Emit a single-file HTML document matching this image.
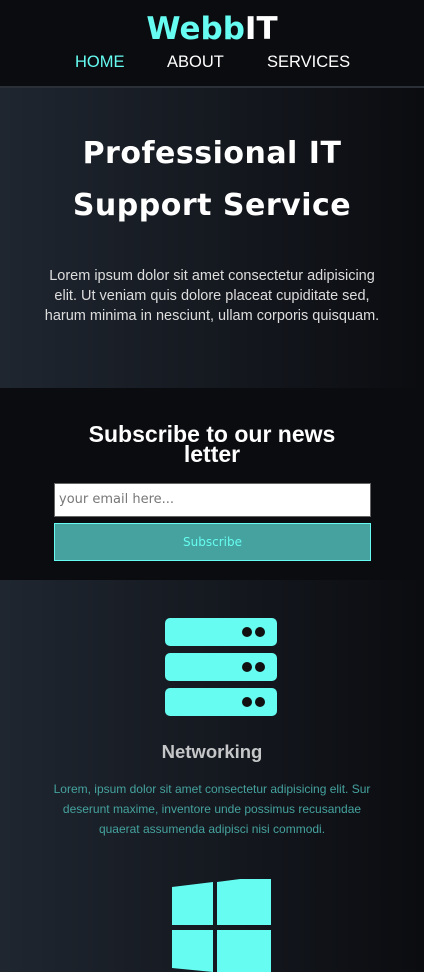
<!DOCTYPE html>
<html><head><style>
*{margin:0;padding:0;box-sizing:border-box}
body{width:424px;height:972px;overflow:hidden;background:#0b0c10;font-family:"Liberation Sans",sans-serif}
header{height:88px;background:#0b0c10;text-align:center;border-bottom:2px solid #2a2f38}
.logo{font-family:"DejaVu Sans",sans-serif;font-weight:bold;font-size:31px;padding-top:10px;line-height:38px;color:#66fcf1}
.logo span{color:#fff}
nav{position:relative;height:30px}
nav a{position:absolute;top:5px;font-size:16.5px;color:#fff;text-decoration:none}
.grad{background:linear-gradient(to right,#1f2630,#0b0c10)}
.hero{height:300px;text-align:center;color:#fff}
.hero h1{font-family:"DejaVu Sans",sans-serif;font-weight:bold;font-size:30px;line-height:52px;padding-top:40px;letter-spacing:0.5px}
.hero p{font-size:14.5px;line-height:20px;color:#ddd;padding:34px 40px 0}
.sub{height:192px;text-align:center;color:#fff;position:relative}
.sub h2{font-size:23px;line-height:20px;padding-top:36px}
.inp{position:absolute;left:54px;top:95px;width:317px;height:34px;background:#fff;border:1px solid #666;color:#777;font-family:"DejaVu Sans",sans-serif;font-size:13px;text-align:left;padding:8px 4px}
.btn{position:absolute;left:54px;top:135px;width:317px;height:38px;background:#45a29e;border:1px solid #66fcf1;color:#66fcf1;font-family:"DejaVu Sans",sans-serif;font-size:12px;line-height:36px}
.svc{height:392px;text-align:center;position:relative}
.svc h3{position:absolute;top:161px;width:100%;font-size:18.5px;color:#c5c6c7}
.svc p{position:absolute;top:199px;left:48px;width:328px;font-size:12px;line-height:20px;color:#45a29e}
</style></head><body>
<header>
<div class="logo">Webb<span>IT</span></div>
<nav><a style="left:75px;color:#66fcf1">HOME</a><a style="left:167px">ABOUT</a><a style="left:267px">SERVICES</a></nav>
</header>
<div class="hero grad">
<h1>Professional IT<br>Support Service</h1>
<p>Lorem ipsum dolor sit amet consectetur adipisicing elit. Ut veniam quis dolore placeat cupiditate sed, harum minima in nesciunt, ullam corporis quisquam.</p>
</div>
<div class="sub">
<h2>Subscribe to our news<br>letter</h2>
<div class="inp">your email here...</div>
<div class="btn">Subscribe</div>
</div>
<div class="svc grad">
<svg style="position:absolute;left:165px;top:38px" width="113" height="100" viewBox="0 0 113 100">
<g fill="#66fcf1"><rect x="0" y="0" width="112" height="28" rx="5"/><rect x="0" y="35" width="112" height="28" rx="5"/><rect x="0" y="70" width="112" height="28" rx="5"/></g>
<g fill="#111"><circle cx="82" cy="14" r="5"/><circle cx="95" cy="14" r="5"/><circle cx="82" cy="49" r="5"/><circle cx="95" cy="49" r="5"/><circle cx="82" cy="84" r="5"/><circle cx="95" cy="84" r="5"/></g>
</svg>
<h3>Networking</h3>
<p>Lorem, ipsum dolor sit amet consectetur adipisicing elit. Sur deserunt maxime, inventore unde possimus recusandae quaerat assumenda adipisci nisi commodi.</p>
<svg style="position:absolute;left:172px;top:299px" width="100" height="93" viewBox="0 0 100 93">
<g fill="#66fcf1"><polygon points="0,8 41,3 41,46 0,46"/><polygon points="45,3 99,-4 99,46 45,46"/><polygon points="0,51 41,51 41,93 0,89"/><polygon points="45,51 99,51 99,93 45,93"/></g>
</svg>
</div>
</body></html>
